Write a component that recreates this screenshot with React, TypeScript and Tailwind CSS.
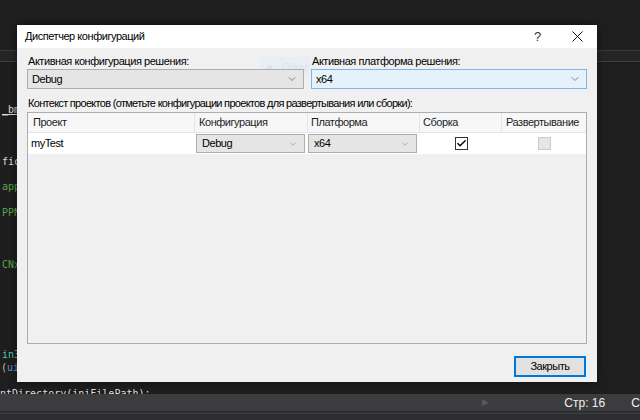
import { Check, ChevronDown } from "lucide-react";

const codeLines: { text: string; cls: string }[] = [
  { text: "_bmp", cls: "text-[#dcdcdc] underline decoration-[#dcdcdc]" },
  { text: "", cls: "" },
  { text: "", cls: "" },
  { text: "", cls: "" },
  { text: "fica", cls: "text-[#dcdcdc]" },
  { text: "", cls: "" },
  { text: "appe", cls: "text-[#57a64a]" },
  { text: "", cls: "" },
  { text: "PPN_", cls: "text-[#57a64a]" },
  { text: "", cls: "" },
  { text: "", cls: "" },
  { text: "", cls: "" },
  { text: "CNx:", cls: "text-[#57a64a]" },
  { text: "", cls: "" },
  { text: "", cls: "" },
  { text: "", cls: "" },
  { text: "", cls: "" },
  { text: "", cls: "" },
  { text: "", cls: "" },
  { text: "in32", cls: "text-[#4ec9b0]" },
];

function Combo({ value, active = false }: { value: string; active?: boolean }) {
  return (
    <div
      className={
        "flex h-5 items-center justify-between border pl-[4px] pr-[5px] " +
        (active ? "border-[#7eb4ea] bg-[#e5f1fb]" : "border-[#adadad] bg-[#e5e5e5]")
      }
    >
      <span>{value}</span>
      <ChevronDown className="h-3 w-3 text-[#606060]" strokeWidth={1.5} />
    </div>
  );
}

function CellCombo({ value }: { value: string }) {
  return (
    <div className="flex h-[19px] items-center justify-between border border-[#adadad] bg-[#e5e5e5] pl-[5px] pr-[6px]">
      <span>{value}</span>
      <ChevronDown className="h-[10px] w-[10px] text-[#8a8a8a]" strokeWidth={1.5} />
    </div>
  );
}

export default function App() {
  return (
    <div className="relative h-[420px] w-[640px] overflow-hidden bg-[#1e1e1e] font-['Liberation_Sans',Arial,sans-serif]">
      {/* IDE background */}
      <div className="flex h-full flex-col">
        <div className="h-[50px] shrink-0 bg-[#1f1f1f]" />
        <div className="h-px shrink-0 bg-[#3a3a3d]" />
        <div className="h-[10px] shrink-0 bg-[#252526]" />
        <div className="h-px shrink-0 bg-[#3f3f46]" />
        <div className="min-h-0 flex-1 overflow-hidden bg-[#1e1e1e] pt-[42px] font-['DejaVu_Sans_Mono',monospace] text-[10px] leading-[12.9px]">
          {codeLines.map((l, i) => (
            <div key={i} className={"h-[12.9px] whitespace-pre pl-[2px] " + l.cls}>
              {l.text}
            </div>
          ))}
          <div className="h-[12.9px] whitespace-pre pl-[1px]">
            <span className="text-[#d7ba7d]">(</span>
            <span className="text-[#569cd6]">uin</span>
          </div>
          <div className="h-[12.9px]" />
          <div className="h-[12.9px] whitespace-pre text-[#dcdcdc]">ntDirectory(iniFilePath);</div>
        </div>
        <div className="flex h-[17px] shrink-0 items-center whitespace-nowrap bg-[#3c3c3f] text-[12px] text-[#f1f1f1]">
          <span className="ml-[482px] w-[10px] text-[9px] text-[#59595c]">▶</span>
          <span className="ml-[73px] w-[40px]">Стр: 16</span>
          <span className="ml-[27px]">С</span>
        </div>
        <div className="h-[2px] shrink-0 bg-[#2d2d30]" />
        <div className="h-px shrink-0 bg-[#3f3f46]" />
        <div className="h-[6px] shrink-0 bg-[#2d2d30]" />
      </div>

      {/* Dialog */}
      <div className="absolute left-[17px] top-[25px] flex h-[357px] w-[580px] flex-col bg-[#f0f0f0] text-[11px] tracking-[-0.45px] text-black shadow-[0_0_8px_rgba(0,0,0,0.5)]">
        <div className="flex h-6 items-center bg-white pl-[8px]">
          <span className="flex-1">Диспетчер конфигураций</span>
          <span className="w-[38px] text-[13px] text-[#333]">?</span>
          <svg className="mr-[14px] h-[11px] w-[11px]" viewBox="0 0 11 11">
            <path d="M0.5 0.5L10.5 10.5M10.5 0.5L0.5 10.5" stroke="#111" strokeWidth="1" />
          </svg>
        </div>

        <div className="relative flex flex-1 flex-col px-[10px] pt-[5px] pb-[5px]">
          {/* faint ghost tooltip behind */}
          <div className="absolute left-[243px] top-[9px] flex h-[20px] w-[50px] items-center overflow-hidden whitespace-nowrap bg-[#e9eef4] pl-[7px] text-[#dfe4ea]">
            <span className="mr-[10px] h-[5px] w-[5px] shrink-0 rounded-full bg-[#dde3ea]" />
            Прям
          </div>

          <div className="relative flex gap-[7px]">
            <div className="w-[277px]">
              <div className="flex h-4 items-center pl-px">Активная конфигурация решения:</div>
              <Combo value="Debug" />
            </div>
            <div className="w-[276px]">
              <div className="flex h-4 items-center pl-px">Активная платформа решения:</div>
              <Combo value="x64" active />
            </div>
          </div>

          <div className="mt-[6px] flex h-4 items-center pl-px tracking-[-0.7px]">
            Контекст проектов (отметьте конфигурации проектов для развертывания или сборки):
          </div>

          <div className="mt-px flex h-[232px] w-[560px] flex-col border border-[#abadb3] bg-[#f0f0f0]">
            <div className="flex h-[20px] border-b border-[#e5e5e5] bg-[#f7f7f7] text-[#1e1e1e]">
              <div className="flex w-[167px] items-center border-r border-[#e5e5e5] pl-[5px]">Проект</div>
              <div className="flex w-[113px] items-center border-r border-[#e5e5e5] pl-[4px]">Конфигурация</div>
              <div className="flex w-[112px] items-center border-r border-[#e5e5e5] pl-[3px]">Платформа</div>
              <div className="flex w-[82px] items-center border-r border-[#e5e5e5] pl-[3px]">Сборка</div>
              <div className="flex flex-1 items-center pl-[4px]">Развертывание</div>
            </div>
            <div className="flex h-[21px] items-center bg-white">
              <div className="w-[167px] pl-[3px]">myTest</div>
              <div className="w-[113px] pl-px pr-[3px]">
                <CellCombo value="Debug" />
              </div>
              <div className="w-[112px] pr-[3px]">
                <CellCombo value="x64" />
              </div>
              <div className="flex w-[82px] justify-center">
                <div className="flex h-[13px] w-[13px] items-center justify-center border border-[#333] bg-white">
                  <Check className="h-[11px] w-[11px] text-black" strokeWidth={3} />
                </div>
              </div>
              <div className="flex flex-1 justify-center">
                <div className="h-[13px] w-[13px] border border-[#cccccc] bg-[#e6e6e6]" />
              </div>
            </div>
          </div>

          <div className="mt-[12px] flex justify-end pr-px">
            <button className="h-[21px] w-[72px] border-2 border-[#0078d7] bg-[#e1e1e1] text-[11px] tracking-[-0.45px]">
              Закрыть
            </button>
          </div>
        </div>
      </div>
    </div>
  );
}
